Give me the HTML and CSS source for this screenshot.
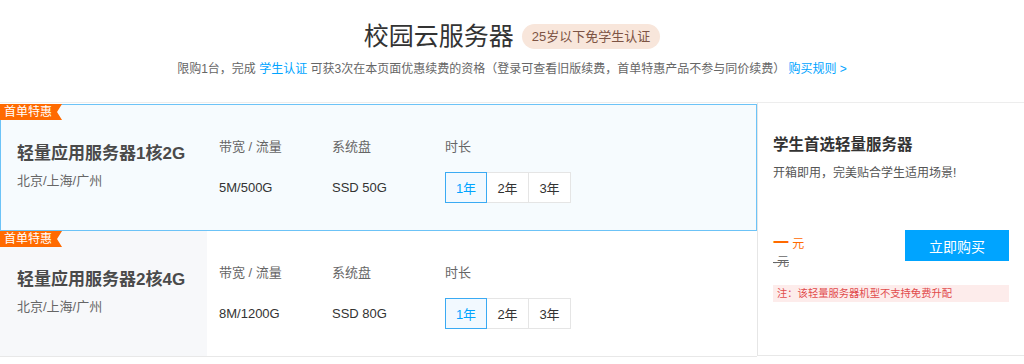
FILE: index.html
```html
<!DOCTYPE html>
<html lang="zh">
<head>
    <meta charset="UTF-8">
    <meta name="viewport" content="width=device-width, initial-scale=1.0">
    <title>校园云服务器</title>
    <link rel="stylesheet" href="styles.css">
</head>
<body>
    <div class="cabecalho">
        <div class="titulo">
            <h1>校园云服务器</h1>
            <span class="selo">25岁以下免学生认证</span>
        </div>
        <p class="aviso">限购1台，完成 <a href="#">学生认证</a> 可获3次在本页面优惠续费的资格（登录可查看旧版续费，首单特惠产品不参与同价续费） <a href="#">购买规则 &gt;</a></p>
    </div>

    <div class="principal">
        <div class="lista">
            <div class="cartao ativo">
                <span class="etiqueta">首单特惠</span>
                <div class="info">
                    <div class="nome">轻量应用服务器1核2G</div>
                    <div class="local">北京/上海/广州</div>
                </div>
                <div class="coluna">
                    <div class="rotulo">带宽 / 流量</div>
                    <div class="valor">5M/500G</div>
                </div>
                <div class="coluna">
                    <div class="rotulo">系统盘</div>
                    <div class="valor">SSD 50G</div>
                </div>
                <div class="coluna">
                    <div class="rotulo">时长</div>
                    <div class="anos">
                        <button class="ano marcado">1年</button>
                        <button class="ano">2年</button>
                        <button class="ano">3年</button>
                    </div>
                </div>
            </div>

            <div class="cartao">
                <span class="etiqueta">首单特惠</span>
                <div class="info">
                    <div class="nome">轻量应用服务器2核4G</div>
                    <div class="local">北京/上海/广州</div>
                </div>
                <div class="coluna">
                    <div class="rotulo">带宽 / 流量</div>
                    <div class="valor">8M/1200G</div>
                </div>
                <div class="coluna">
                    <div class="rotulo">系统盘</div>
                    <div class="valor">SSD 80G</div>
                </div>
                <div class="coluna">
                    <div class="rotulo">时长</div>
                    <div class="anos">
                        <button class="ano marcado">1年</button>
                        <button class="ano">2年</button>
                        <button class="ano">3年</button>
                    </div>
                </div>
            </div>
        </div>

        <div class="lateral">
            <div class="lateral-titulo">学生首选轻量服务器</div>
            <div class="lateral-texto">开箱即用，完美贴合学生适用场景!</div>
            <div class="compra">
                <div class="preco">
                    <div class="atual"><b>一</b> 元</div>
                    <div class="antigo">-元</div>
                </div>
                <button class="comprar">立即购买</button>
            </div>
            <div class="nota">注：该轻量服务器机型不支持免费升配</div>
        </div>
    </div>
</body>
</html>
```

FILE: styles.css
```css
body {
    margin: 0;
    padding: 0;
    background-color: #fff;
    color: #333;
    font-family: "Liberation Sans", Arial, "Noto Sans CJK SC", sans-serif;
}

.cabecalho {
    height: 102px;
    padding-top: 19px;
    box-sizing: border-box;
    text-align: center;
}

.titulo {
    display: flex;
    justify-content: center;
    align-items: center;
    gap: 8px;
    height: 34px;
}

.titulo h1 {
    margin: 0;
    font-size: 25px;
    font-weight: normal;
    line-height: 34px;
    color: #333;
}

.selo {
    height: 25px;
    line-height: 25px;
    padding: 0 10px;
    border-radius: 13px;
    background-color: #f8e6db;
    color: #7d5444;
    font-size: 13px;
}

.aviso {
    margin: 7px 0 0;
    font-size: 12px;
    line-height: 18px;
    color: #666;
}

.aviso a {
    color: #00a4ff;
    text-decoration: none;
}

.principal {
    display: flex;
    border-top: 1px solid #ededed;
}

.lista {
    width: 757px;
    padding-top: 1px;
}

.cartao {
    position: relative;
    display: flex;
    height: 126px;
    box-sizing: border-box;
    border-bottom: 1px solid #e8e8e8;
}

.cartao.ativo {
    height: 127px;
    border: 1px solid #6cc3f7;
    background-color: #f6fbfe;
}

.etiqueta {
    position: absolute;
    top: 0;
    left: 0;
    height: 16px;
    line-height: 16px;
    padding: 0 10px 0 4px;
    background-color: #ff6a00;
    color: #fff;
    font-size: 12px;
    clip-path: polygon(0 0, 100% 0, calc(100% - 5px) 50%, 100% 100%, 0 100%);
}

.cartao.ativo .etiqueta {
    top: -1px;
    left: -1px;
}

.info {
    width: 207px;
    padding: 37px 0 0 17px;
    box-sizing: border-box;
    background-color: #f7f8fa;
}

.cartao.ativo .info {
    width: 206px;
    padding-left: 16px;
    background-color: transparent;
}

.nome {
    font-size: 17px;
    font-weight: bold;
    line-height: 24px;
    color: #4a4a4a;
}

.local {
    margin-top: 6px;
    font-size: 13px;
    line-height: 18px;
    color: #666;
}

.coluna {
    width: 113px;
    padding-top: 33px;
}

.coluna:nth-child(3) {
    margin-left: 12px;
}

.rotulo {
    font-size: 13px;
    line-height: 18px;
    color: #666;
}

.valor,
.anos {
    display: flex;
    align-items: center;
    height: 31px;
    margin-top: 16px;
    font-size: 13px;
    color: #333;
}

.ano {
    flex-shrink: 0;
    width: 42px;
    height: 31px;
    margin: 0;
    padding: 0;
    border: 1px solid #e5e5e5;
    background-color: #fff;
    color: #333;
    font-family: inherit;
    font-size: 13px;
    cursor: pointer;
}

.ano + .ano {
    border-left: none;
}

.ano.marcado {
    border-color: #3aaaf3;
    background-color: #f2f9ff;
    color: #00a4ff;
}

.lateral {
    flex: 1;
    padding: 31px 15px 0;
    border-left: 1px solid #e6e6e6;
    border-bottom: 1px solid #e8e8e8;
    height: 253px;
    box-sizing: border-box;
}

.lateral-titulo {
    font-size: 15.5px;
    font-weight: bold;
    line-height: 22px;
    color: #333;
}

.lateral-texto {
    margin-top: 8px;
    font-size: 12px;
    line-height: 18px;
    color: #555;
}

.compra {
    display: flex;
    justify-content: space-between;
    margin-top: 48px;
}

.preco {
    padding-top: 3px;
}

.atual {
    font-size: 12px;
    line-height: 20px;
    color: #ff6a00;
}

.atual b {
    font-size: 16px;
}

.antigo {
    font-size: 12px;
    line-height: 16px;
    color: #666;
    text-decoration: line-through;
}

.comprar {
    width: 104px;
    height: 31px;
    border: none;
    background-color: #00a4ff;
    color: #fff;
    font-family: inherit;
    font-size: 14px;
    cursor: pointer;
}

.nota {
    margin-top: 15px;
    height: 17px;
    line-height: 17px;
    padding-left: 4px;
    background-color: #fdeceb;
    color: #e14b4b;
    font-size: 10.3px;
}
```
